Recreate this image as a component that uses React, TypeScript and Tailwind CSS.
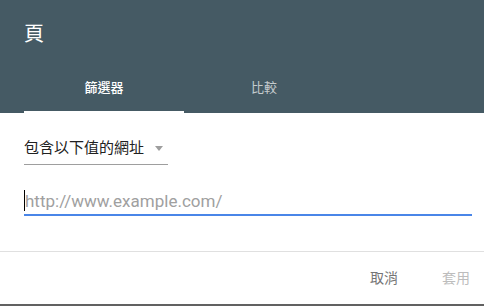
import React from 'react';

const font = { fontFamily: 'Roboto, "Noto Sans CJK TC", sans-serif' };

const tabs = ['篩選器', '比較'];

const App: React.FC = () => {
  return (
    <div className="w-[484px] h-[306px] bg-white flex flex-col overflow-hidden" style={font}>
      {/* Header */}
      <div className="bg-[#455a64] px-6 h-[113px] flex flex-col">
        <div className="pt-5 h-12 text-xl leading-7 text-white">頁</div>
        <div className="mt-[17px] flex">
          {tabs.map((t, i) => (
            <div
              key={t}
              className={`w-40 h-12 flex items-center justify-center text-[13px] border-b-2 ${
                i === 0 ? 'border-white text-white font-medium' : 'border-transparent text-white/70'
              }`}
            >
              {t}
            </div>
          ))}
        </div>
      </div>

      {/* Body */}
      <div className="flex-1 flex flex-col">
        <div className="px-6 pt-6">
          <div className="w-36 h-[28px] flex items-center border-b border-[#9e9e9e] pb-1">
            <span className="text-[15px] text-[#212121]">包含以下值的網址</span>
            <span className="ml-[11px] w-0 h-0 border-l-[4px] border-r-[4px] border-t-[5px] border-l-transparent border-r-transparent border-t-[#9e9e9e]" />
          </div>
        </div>

        <div className="pl-6 pr-3 mt-6">
          <div className="relative border-b-2 border-[#4a86e8]">
            <input
              className="w-full h-[25px] pl-[1px] text-[17px] outline-none bg-transparent placeholder:text-[#a0a0a0]"
              placeholder="http://www.example.com/"
              readOnly
            />
            <span className="absolute left-0 top-[1px] w-px h-[21px] bg-black" />
          </div>
        </div>

        <div className="mt-auto border-t border-[#e0e0e0] h-[53px] flex items-center justify-end pr-[14px] gap-[44px] text-sm">
          <button className="text-[#757575]">取消</button>
          <button className="text-[#bdbdbd]">套用</button>
        </div>
        <div className="h-[2px] bg-[#616161]" />
      </div>
    </div>
  );
};

export default App;
